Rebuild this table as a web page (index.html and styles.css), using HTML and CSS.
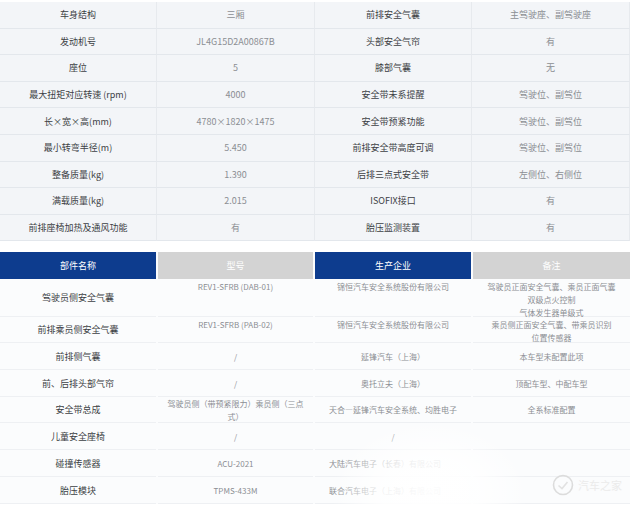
FILE: index.html
```html
<!DOCTYPE html>
<html lang="zh-CN">
<head>
<meta charset="utf-8">
<title>车型参数配置</title>
<link rel="stylesheet" href="styles.css">
</head>
<body>
<div class="page">
  <div class="spec">
    <div class="k">车身结构</div><div class="v">三厢</div><div class="k">前排安全气囊</div><div class="v">主驾驶座、副驾驶座</div>
    <div class="k">发动机号</div><div class="v">JL4G15D2A00867B</div><div class="k">头部安全气帘</div><div class="v">有</div>
    <div class="k">座位</div><div class="v">5</div><div class="k">膝部气囊</div><div class="v">无</div>
    <div class="k">最大扭矩对应转速 (rpm)</div><div class="v">4000</div><div class="k">安全带未系提醒</div><div class="v">驾驶位、副驾位</div>
    <div class="k">长×宽×高(mm)</div><div class="v">4780×1820×1475</div><div class="k">安全带预紧功能</div><div class="v">驾驶位、副驾位</div>
    <div class="k">最小转弯半径(m)</div><div class="v">5.450</div><div class="k">前排安全带高度可调</div><div class="v">驾驶位、副驾位</div>
    <div class="k">整备质量(kg)</div><div class="v">1.390</div><div class="k">后排三点式安全带</div><div class="v">左侧位、右侧位</div>
    <div class="k">满载质量(kg)</div><div class="v">2.015</div><div class="k">ISOFIX接口</div><div class="v">有</div>
    <div class="k">前排座椅加热及通风功能</div><div class="v">有</div><div class="k">胎压监测装置</div><div class="v">有</div>
  </div>

  <div class="parts">
    <div class="h blue">部件名称</div><div class="h grey">型号</div><div class="h blue">生产企业</div><div class="h grey">备注</div>

    <div class="k">驾驶员侧安全气囊</div>
    <div class="v top">REV1-SFRB (DAB-01)</div>
    <div class="v top">锦恒汽车安全系统股份有限公司</div>
    <div class="v top">驾驶员正面安全气囊、乘员正面气囊<br>双级点火控制<br>气体发生器单级式</div>

    <div class="k">前排乘员侧安全气囊</div>
    <div class="v top">REV1-SFRB (PAB-02)</div>
    <div class="v top">锦恒汽车安全系统股份有限公司</div>
    <div class="v top">乘员侧正面安全气囊、带乘员识别<br>位置传感器</div>

    <div class="k">前排侧气囊</div><div class="v">/</div>
    <div class="v">延锋汽车（上海）</div><div class="v">本车型未配置此项</div>

    <div class="k">前、后排头部气帘</div><div class="v">/</div>
    <div class="v">奥托立夫（上海）</div><div class="v">顶配车型、中配车型</div>

    <div class="k">安全带总成</div><div class="v">驾驶员侧（带预紧限力）乘员侧（三点<br>式）</div>
    <div class="v">天合—延锋汽车安全系统、均胜电子</div><div class="v">全系标准配置</div>

    <div class="k">儿童安全座椅</div><div class="v">/</div>
    <div class="v">/</div><div class="v"></div>

    <div class="k">碰撞传感器</div><div class="v">ACU-2021</div>
    <div class="v left">大陆汽车电子（长春）有限公司</div><div class="v"></div>

    <div class="k">胎压模块</div><div class="v">TPMS-433M</div>
    <div class="v left">联合汽车电子（上海）有限公司</div><div class="v"></div>
  </div>

  <div class="haze"></div>
  <div class="mark">
    <svg width="22" height="22" viewBox="0 0 22 22"><circle cx="11" cy="11" r="9.5" fill="none" stroke="#dcdcdc" stroke-width="1.6"/><path d="M6.5 11.5 L10 14.5 L15.5 8" fill="none" stroke="#e2e2e2" stroke-width="1.6"/></svg>
    <span>汽车之家</span>
  </div>
</div>
</body>
</html>
```

FILE: styles.css
```css
html, body {
  margin: 0;
  padding: 0;
  background: #ffffff;
}

.page {
  position: relative;
  width: 630px;
  height: 508px;
  overflow: hidden;
  font-family: "Noto Sans CJK SC", "Noto Sans", "Liberation Sans", sans-serif;
  font-size: 9px;
  line-height: 13px;
}

.spec {
  display: grid;
  grid-template-columns: 157px 158px 157px 158px;
  grid-auto-rows: 26.6px;
  margin-top: 2px;
  background: #f3f5f8;
}

.spec > div {
  display: flex;
  align-items: center;
  justify-content: center;
  text-align: center;
  border-bottom: 1px solid #e3e7ec;
  border-right: 1px solid #e7eaee;
  white-space: nowrap;
}

.k {
  color: #3c3f44;
}

.v {
  color: #8b8e93;
}

.parts {
  display: grid;
  grid-template-columns: 156px 155px 156px 157px;
  column-gap: 2px;
  grid-template-rows: 27px 38px 26px 27px 27px 26px 27px 27px 27px;
  margin-top: 11px;
  background: #fbfcfd;
}

.parts > div {
  display: flex;
  align-items: center;
  justify-content: center;
  text-align: center;
  border-bottom: 1px solid #eef0f3;
  white-space: nowrap;
}

.parts > .v {
  font-size: 8px;
  line-height: 13px;
}

.parts > .h {
  color: #ffffff;
  border-bottom: none;
}

.blue {
  background: #0d3c8e;
}

.grey {
  background: #d3d3d3;
}

.parts > .top {
  align-items: flex-start;
  padding-top: 1px;
}

.parts > .left {
  justify-content: flex-start;
  padding-left: 14px;
}

.haze {
  position: absolute;
  left: 330px;
  top: 420px;
  width: 200px;
  height: 120px;
  background: radial-gradient(ellipse at 50% 60%, rgba(255,255,255,0.97) 0%, rgba(255,255,255,0.85) 35%, rgba(255,255,255,0) 70%);
}

.mark {
  position: absolute;
  left: 552px;
  top: 474px;
  display: flex;
  align-items: center;
  gap: 4px;
  color: #ebebeb;
  font-size: 11px;
}
```
